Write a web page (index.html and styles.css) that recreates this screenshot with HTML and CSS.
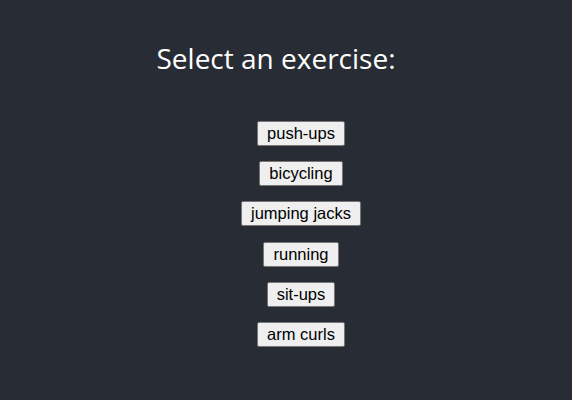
FILE: index.html
```html
<!DOCTYPE html>
<html>
<head>
<meta charset="utf-8">
<link rel="stylesheet" href="styles.css">
</head>
<body>
<div class="app">
  <h1 class="title">Select an exercise:</h1>
  <ul class="list">
    <li><button class="btn">push-ups</button></li>
    <li><button class="btn">bicycling</button></li>
    <li><button class="btn">jumping jacks</button></li>
    <li><button class="btn">running</button></li>
    <li><button class="btn">sit-ups</button></li>
    <li><button class="btn">arm curls</button></li>
  </ul>
</div>
</body>
</html>
```
FILE: styles.css
```css
html, body {
  margin: 0;
  padding: 0;
  background: #282c34;
  height: 100%;
}
.app {
  display: flex;
  flex-direction: column;
  align-items: center;
  padding-top: 38px;
}
.title {
  margin: 0 20px 0 0;
  color: #ffffff;
  font-family: "Open Sans", sans-serif;
  font-weight: 400;
  font-size: 28px;
  line-height: 40px;
}
.list {
  list-style: none;
  margin: 43px 0 0 0;
  padding: 0 0 0 30px;
  display: flex;
  flex-direction: column;
  align-items: center;
  gap: 15.2px;
}
.list li {
  display: flex;
}
.btn {
  font-family: "Liberation Sans", Arial, sans-serif;
  font-size: 16.5px;
  line-height: 19px;
  color: #000;
  background: #efefef;
  border: 1px solid #767676;
  border-radius: 2px;
  padding: 2px 9px;
  margin: 0;
}
```
